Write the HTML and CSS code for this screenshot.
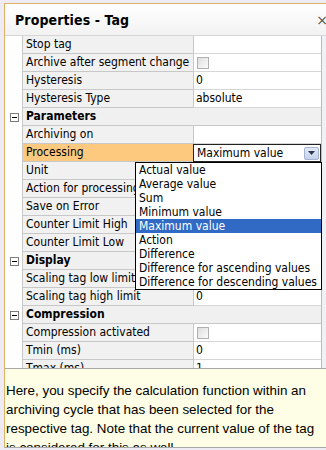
FILE: index.html
```html
<!DOCTYPE html>
<html>
<head>
<meta charset="utf-8">
<link rel="stylesheet" href="styles.css">
</head>
<body>
<div class="frame">
  <div class="titlebar">
    <span class="title">Properties - Tag</span>
    <span class="close">×</span>
  </div>
  <div class="gridwrap">
    <div class="grid">
      <div class="row"><div class="gut"></div><div class="lbl">Stop tag</div><div class="val"></div></div>
      <div class="row"><div class="gut"></div><div class="lbl">Archive after segment change</div><div class="val"><span class="chk"></span></div></div>
      <div class="row"><div class="gut"></div><div class="lbl">Hysteresis</div><div class="val">0</div></div>
      <div class="row"><div class="gut"></div><div class="lbl">Hysteresis Type</div><div class="val">absolute</div></div>
      <div class="row cat"><div class="gut"><span class="minus"></span></div><div class="cattxt">Parameters</div></div>
      <div class="row"><div class="gut"></div><div class="lbl">Archiving on</div><div class="val"></div></div>
      <div class="row sel"><div class="gut"></div><div class="lbl">Processing</div><div class="val combo"><span class="ctext">Maximum value</span><span class="cbtn"><svg width="7" height="4" viewBox="0 0 7 4"><path d="M0 0H7L3.5 4Z" fill="#2a3550"/></svg></span></div></div>
      <div class="row"><div class="gut"></div><div class="lbl">Unit</div><div class="val"></div></div>
      <div class="row"><div class="gut"></div><div class="lbl">Action for processing</div><div class="val"></div></div>
      <div class="row"><div class="gut"></div><div class="lbl">Save on Error</div><div class="val"></div></div>
      <div class="row"><div class="gut"></div><div class="lbl">Counter Limit High</div><div class="val"></div></div>
      <div class="row"><div class="gut"></div><div class="lbl">Counter Limit Low</div><div class="val"></div></div>
      <div class="row cat"><div class="gut"><span class="minus"></span></div><div class="cattxt">Display</div></div>
      <div class="row"><div class="gut"></div><div class="lbl">Scaling tag low limit</div><div class="val"></div></div>
      <div class="row"><div class="gut"></div><div class="lbl">Scaling tag high limit</div><div class="val">0</div></div>
      <div class="row cat"><div class="gut"><span class="minus"></span></div><div class="cattxt">Compression</div></div>
      <div class="row"><div class="gut"></div><div class="lbl">Compression activated</div><div class="val"><span class="chk"></span></div></div>
      <div class="row"><div class="gut"></div><div class="lbl">Tmin (ms)</div><div class="val">0</div></div>
      <div class="row"><div class="gut"></div><div class="lbl">Tmax (ms)</div><div class="val">1</div></div>
    </div>
    <div class="scroll"></div>
    <ul class="dropdown">
      <li>Actual value</li>
      <li>Average value</li>
      <li>Sum</li>
      <li>Minimum value</li>
      <li class="hi">Maximum value</li>
      <li>Action</li>
      <li>Difference</li>
      <li>Difference for ascending values</li>
      <li>Difference for descending values</li>
    </ul>
  </div>
  <div class="desc">
    Here, you specify the calculation function within an archiving cycle that has been selected for the respective tag. Note that the current value of the tag is considered for this as well.
  </div>
</div>
</body>
</html>
```

FILE: styles.css
```css
html, body {
  margin: 0;
  padding: 0;
}
body {
  width: 326px;
  height: 450px;
  overflow: hidden;
  background: #eeebf4;
  padding: 3px 0 0 4px;
  box-sizing: border-box;
  font-family: "DejaVu Sans Condensed", "DejaVu Sans", sans-serif;
  font-size: 12px;
  color: #000;
}
.frame {
  border-top: 1px solid #dcb268;
  border-left: 1px solid #dcb268;
  border-bottom: 1px solid #a8a8a8;
  width: 330px;
  height: 443px;
  display: flex;
  flex-direction: column;
  background: #fff;
  overflow: hidden;
}
.titlebar {
  height: 32px;
  flex: none;
  display: flex;
  align-items: center;
  justify-content: space-between;
  background: linear-gradient(#ffffff, #f2f2f2);
  border-bottom: 1px solid #d6d6d6;
  box-sizing: border-box;
}
.title {
  font-weight: bold;
  font-size: 14px;
  padding-left: 10px;
  letter-spacing: 0.1px;
}
.close {
  font-family: "DejaVu Sans", sans-serif;
  font-size: 14px;
  color: #555;
  margin-right: 7px;
}
.gridwrap {
  position: relative;
  height: 332px;
  flex: none;
  display: flex;
  overflow: hidden;
}
.grid {
  width: 316px;
  flex: none;
}
.row {
  display: flex;
  height: 18px;
}
.gut {
  width: 17px;
  flex: none;
  background: #fff;
  border-right: 1px solid #c8c8c8;
  display: flex;
  align-items: center;
  justify-content: center;
}
.lbl {
  width: 167px;
  flex: none;
  background: #f1f1f1;
  border-right: 1px solid #c8c8c8;
  border-bottom: 1px solid #c8c8c8;
  padding-left: 3px;
  line-height: 17px;
  white-space: nowrap;
  overflow: hidden;
}
.val {
  flex: 1;
  background: #fff;
  border-bottom: 1px solid #d6d6d6;
  padding-left: 2px;
  line-height: 17px;
  white-space: nowrap;
  display: flex;
  align-items: center;
}
.cat .cattxt {
  flex: 1;
  background: #f0f0f0;
  border-bottom: 1px solid #c8c8c8;
  padding-left: 3px;
  font-weight: bold;
  line-height: 17px;
}
.minus {
  width: 7px;
  height: 7px;
  border: 1px solid #7a7a7a;
  background: #fff;
  position: relative;
  margin-left: 1px;
}
.minus::after {
  content: "";
  position: absolute;
  left: 1px;
  right: 1px;
  top: 3px;
  height: 1px;
  background: #000;
}
.chk {
  width: 10px;
  height: 10px;
  border: 1px solid #b0b0b0;
  background: linear-gradient(135deg, #dedede, #fbfbfb);
  margin-left: 1px;
}
.sel .lbl {
  background: #fcc97f;
}
.sel .val {
  border: 1px solid #222;
  margin-left: -1px;
  padding-left: 3px;
  height: 16px;
  justify-content: space-between;
}
.combo .cbtn {
  width: 15px;
  height: 13px;
  margin-right: 1px;
  background: linear-gradient(#e2e9f7, #c5d2ea);
  border: 1px solid #a5b4d2;
  border-radius: 2px;
  display: flex;
  align-items: center;
  justify-content: center;
  box-sizing: border-box;
}
.scroll {
  flex: 1;
  background: #eef1f6;
  border-left: 1px solid #b5bcc8;
}
.dropdown {
  position: absolute;
  left: 130px;
  top: 126px;
  width: 185px;
  margin: 0;
  padding: 0;
  list-style: none;
  border: 1px solid #000;
  background: #fff;
}
.dropdown li {
  height: 14px;
  line-height: 14px;
  padding-left: 3px;
  white-space: nowrap;
}
.dropdown li.hi {
  background: #316ac5;
  color: #fff;
}
.desc {
  flex: 1;
  background: #fefee6;
  border-top: 1px solid #a8a8a8;
  font-family: "Liberation Sans", Arial, sans-serif;
  font-size: 13.4px;
  line-height: 19px;
  padding: 12px 13px 0 1px;
  overflow: hidden;
}
```
